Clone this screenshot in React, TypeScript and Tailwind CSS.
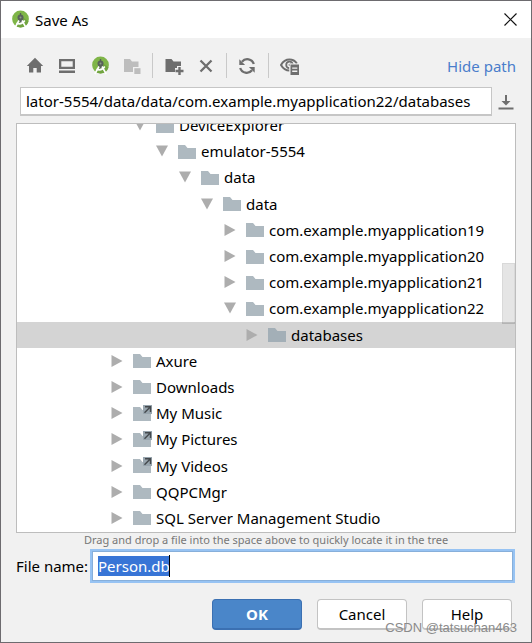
import { useEffect, useRef, useState, type ReactNode } from "react";

type Node = {
  name: string;
  indent: string;
  open?: boolean;
  selected?: boolean;
  link?: boolean;
};

const nodes: Node[] = [
  { name: "DeviceExplorer", indent: "pl-[117px]", open: true },
  { name: "emulator-5554", indent: "pl-[139px]", open: true },
  { name: "data", indent: "pl-[162px]", open: true },
  { name: "data", indent: "pl-[184px]", open: true },
  { name: "com.example.myapplication19", indent: "pl-[207px]" },
  { name: "com.example.myapplication20", indent: "pl-[207px]" },
  { name: "com.example.myapplication21", indent: "pl-[207px]" },
  { name: "com.example.myapplication22", indent: "pl-[207px]", open: true },
  { name: "databases", indent: "pl-[229px]", selected: true },
  { name: "Axure", indent: "pl-[94px]" },
  { name: "Downloads", indent: "pl-[94px]" },
  { name: "My Music", indent: "pl-[94px]", link: true },
  { name: "My Pictures", indent: "pl-[94px]", link: true },
  { name: "My Videos", indent: "pl-[94px]", link: true },
  { name: "QQPCMgr", indent: "pl-[94px]" },
  { name: "SQL Server Management Studio", indent: "pl-[94px]" },
];

function AndroidStudio() {
  return (
    <svg className="size-5 shrink-0" viewBox="0 0 20 20" aria-hidden="true">
      <circle cx="10.500" cy="9" r="8.400" fill="#7fb548" />
      <path d="M12 6.500 18.500 11.500a8.400 8.400 0 0 1-8 5.900 8.400 8.400 0 0 1-5-1.700Z" fill="#71a440" />
      <path d="M9.800 3h1.400v2H9.800z" fill="#555f55" />
      <circle cx="10.500" cy="7.500" r="3" fill="#59625b" />
      <path d="M8.300 9 9.500 12.500h2L12.700 9Z" fill="#59625b" />
      <circle cx="10.500" cy="7.400" r="1" fill="#8b9b86" />
      <path d="M9 10.500 4.800 18M12 10.500l4.200 7.500" stroke="#fff" strokeWidth="1.600" fill="none" />
      <path d="M6.500 13.200c3.300 1.500 6 .6 8.300-2.700" stroke="#fff" strokeWidth="1.500" fill="none" />
    </svg>
  );
}

function Icon({ children }: { children: ReactNode }) {
  return (
    <svg className="size-5" viewBox="0 0 20 20" fill="#6e6e6e" aria-hidden="true">
      {children}
    </svg>
  );
}

function ToolButton({ label, disabled, children }: { label: string; disabled?: boolean; children: ReactNode }) {
  return (
    <button type="button" aria-label={label} disabled={disabled} className="size-5 shrink-0">
      {children}
    </button>
  );
}

function Separator() {
  return <div className="mr-[11px] ml-2.5 h-[25px] w-px shrink-0 bg-[#c9c9c9]" />;
}

function TreeRow({ node }: { node: Node }) {
  return (
    <li
      role="treeitem"
      aria-expanded={!!node.open}
      aria-selected={!!node.selected}
      className={`flex items-center ${node.indent} ${node.selected ? "bg-[#d4d4d4]" : ""}`}
    >
      <svg className="mr-2.5 size-3 shrink-0" viewBox="0 0 12 12" fill="#adadad" aria-hidden="true">
        {node.open ? <path d="M0 .5h12L6 11.500Z" /> : <path d="M.5 0v12L11.500 6Z" />}
      </svg>
      <svg className="mr-1 h-[17px] w-[19px] shrink-0" viewBox="0 0 19 17" aria-hidden="true">
        <path d="M0 2h7l2.500 3H18v11H0Z" fill={node.selected ? "#a3afb7" : "#aeb9c0"} />
        {node.link && (
          <>
            <path d="M10 0h9v9h-9z" fill="#98a5ae" />
            <path d="M12 1.700h5.500V7M17.200 2 11.500 7.700" stroke="#44494d" strokeWidth="1.400" fill="none" />
          </>
        )}
      </svg>
      <span className="whitespace-nowrap">{node.name}</span>
    </li>
  );
}

export default function App() {
  const fileRef = useRef<HTMLInputElement>(null);
  const [path, setPath] = useState("lator-5554/data/data/com.example.myapplication22/databases");
  const [file, setFile] = useState("Person.db");

  useEffect(() => {
    fileRef.current?.focus();
    fileRef.current?.select();
  }, []);

  return (
    <main className="relative min-h-screen border border-[#6d6b6f] bg-[#f1f1f1] font-['Noto_Sans',sans-serif] text-[15px] leading-5 text-black">
      <header className="flex h-[37px] items-center bg-white pr-3.5 pl-[9px]">
        <AndroidStudio />
        <h1 className="ml-[5px] flex-1">Save As</h1>
        <button type="button" aria-label="Close">
          <svg className="size-[13px]" viewBox="0 0 13 13" stroke="#111" strokeWidth="1.200" aria-hidden="true">
            <path d="M.5.5l12 12M12.500.5l-12 12" />
          </svg>
        </button>
      </header>

      <div className="px-[15px] pt-[15px] pb-[9px]">
        <div className="flex h-[25px] items-center pl-2.5">
          <div className="flex gap-3">
            <ToolButton label="Home">
              <Icon>
                <path d="M9 1.800.8 10H3v6.500h4.300V12h3.400v4.500H15V10h2.200Z" />
              </Icon>
            </ToolButton>
            <ToolButton label="Desktop">
              <Icon>
                <path fillRule="evenodd" d="M1 3h16v10H1ZM3.300 5.200v5.600h11.400V5.200ZM1 14.600h16v2.400H1Z" />
              </Icon>
            </ToolButton>
            <ToolButton label="Project">
              <AndroidStudio />
            </ToolButton>
            <ToolButton label="Module" disabled>
              <Icon>
                <path fill="#bdbdbd" d="M2 3h6l2 2.500h6.500V11H11v5H2Z" />
                <path fill="#bdbdbd" d="M12.300 12.200h6.200v5.800h-6.200z" />
              </Icon>
            </ToolButton>
          </div>
          <Separator />
          <div className="flex gap-3">
            <ToolButton label="New folder">
              <Icon>
                <path d="M1.500 3h6l2 2.500H17V10h-4v2h-2v4H1.500Z" />
                <path d="M14.300 11h2.400v2.800h2.800v2.400h-2.800V19h-2.400v-2.800h-2.800v-2.400h2.800Z" />
              </Icon>
            </ToolButton>
            <ToolButton label="Delete">
              <Icon>
                <path d="M4.500 4.500l11 11M15.500 4.500l-11 11" stroke="#6e6e6e" strokeWidth="2.300" />
              </Icon>
            </ToolButton>
          </div>
          <Separator />
          <ToolButton label="Refresh">
            <Icon>
              <path
                d="M15.800 8A6.800 6.800 0 0 0 4 5.800M2.200 12a6.800 6.800 0 0 0 11.800 2.200"
                fill="none"
                stroke="#6e6e6e"
                strokeWidth="2.300"
              />
              <path d="M1.300 3.200v5.800h5.800ZM16.700 16.800v-5.800h-5.800Z" />
            </Icon>
          </ToolButton>
          <Separator />
          <ToolButton label="Show hidden files">
            <Icon>
              <path
                d="M9.500 14.600C6 14.600 3 12.500 1 9c2-3.500 5-5.400 8.500-5.400 3.400 0 6 1.900 7.400 4"
                fill="none"
                stroke="#6e6e6e"
                strokeWidth="2"
              />
              <path
                d="M9.300 12.200A3.300 3.300 0 1 1 12.700 8"
                fill="none"
                stroke="#6e6e6e"
                strokeWidth="1.800"
              />
              <path d="M8.500 8.500 11 7v3H9Z" />
              <path fill="#f1f1f1" d="M9.500 7.500H20V20H9.500Z" />
              <path fillRule="evenodd" d="M10.500 8.500H19V19h-8.500ZM12.200 11.400v1.400h5.100v-1.400ZM12.200 14.600V16h5.100v-1.400Z" />
            </Icon>
          </ToolButton>
          <a href="#path" className="ml-auto text-[#4a7dcb]">
            Hide path
          </a>
        </div>

        <div className="mt-[9px] flex items-center pr-0.5 pl-1">
          <input
            aria-label="Path"
            value={path}
            onChange={(e) => setPath(e.target.value)}
            className="h-[29px] min-w-0 flex-1 border border-b-2 border-[#c6c6c6] bg-white px-[5px] outline-none"
          />
          <button type="button" aria-label="Path history" className="ml-1.5">
            <svg className="size-4" viewBox="0 0 16 16" fill="#6e6e6e" aria-hidden="true">
              <path d="M7 1h2v6h3.500L8 11.500 3.500 7H7ZM.5 13.500h15v2H.5z" />
            </svg>
          </button>
        </div>

        <div className="relative mt-[7px] flex h-[410px] flex-col justify-end overflow-hidden border border-[#bdbdbd] bg-white pb-px">
          <ul role="tree" aria-label="Files" className="grid h-[419px] shrink-0 auto-rows-fr">
            {nodes.map((node, i) => (
              <TreeRow key={i} node={node} />
            ))}
          </ul>
          <div className="absolute top-[139px] right-0 h-[61px] w-[13px] border border-black/5 bg-black/10" />
        </div>

        <p className="text-center text-[11px] leading-[14px] text-[#777]">
          Drag and drop a file into the space above to quickly locate it in the tree
        </p>

        <div className="mt-0.5 flex items-center pr-px">
          <label htmlFor="file" className="w-[74px] whitespace-nowrap">
            File name:
          </label>
          <div className="relative flex-1 border-2 border-[#97c3f3]">
            <input
              id="file"
              ref={fileRef}
              value={file}
              onChange={(e) => setFile(e.target.value)}
              className="block h-[30px] w-full border border-[#87afda] bg-white px-[5px] leading-[22px] outline-none selection:bg-[#3875d6] selection:text-white"
            />
            <span className="absolute top-1 left-[77px] h-[22px] w-px bg-black" />
          </div>
        </div>

        <div className="mt-4 flex justify-end gap-[15px] pr-1">
          <button
            type="button"
            className="h-[31px] w-[90px] rounded-[4px] border border-b-2 border-[#3b70b2] bg-[#4a86c9] font-bold text-white"
          >
            OK
          </button>
          <button type="button" className="h-[31px] w-[90px] rounded-[4px] border border-b-2 border-[#c3c3c3] bg-white">
            Cancel
          </button>
          <button type="button" className="h-[31px] w-[90px] rounded-[4px] border border-b-2 border-[#c3c3c3] bg-white">
            Help
          </button>
        </div>
      </div>

      <div className="pointer-events-none absolute right-3.5 bottom-1 font-['Liberation_Sans',sans-serif] text-[13px] text-[#8a8a8a]">
        CSDN @tatsuchan463
      </div>
    </main>
  );
}
